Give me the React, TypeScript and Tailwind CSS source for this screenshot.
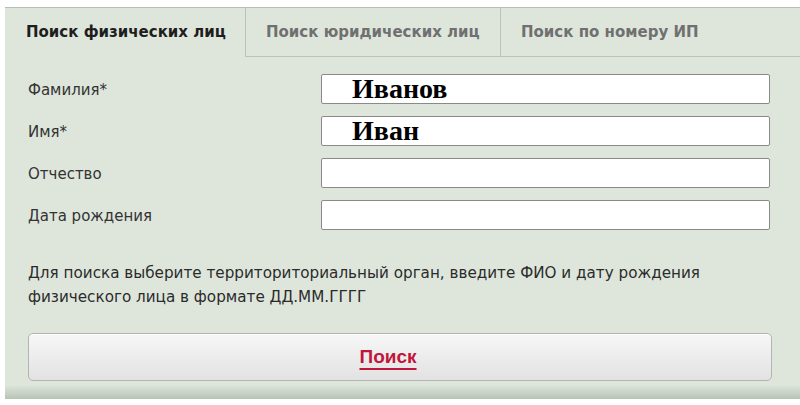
export default function App() {
  const fields = [
    { label: "Фамилия*", value: "Иванов" },
    { label: "Имя*", value: "Иван" },
    { label: "Отчество", value: "" },
    { label: "Дата рождения", value: "" },
  ];

  return (
    <div className="w-[800px] h-[405px] bg-white pt-[7px] pl-[5px] overflow-hidden font-['DejaVu_Sans',Verdana,sans-serif]">
      <div className="h-[392px] flex flex-col bg-[#dee6dc] border-t border-[#b6c0b4]">
        {/* Tabs */}
        <div className="flex h-[49px] shrink-0 text-[15px] font-bold">
          <div className="w-[240px] flex items-center pl-[21px] text-[#1e1e1e]">
            Поиск физических лиц
          </div>
          <div className="w-[255px] flex items-center pl-[20px] text-[#707070] border-l border-b border-[#b9c3b7]">
            Поиск юридических лиц
          </div>
          <div className="flex-1 flex items-center pl-[20px] text-[#707070] border-l border-b border-[#b9c3b7]">
            Поиск по номеру ИП
          </div>
        </div>

        {/* Form */}
        <div className="flex flex-col gap-[12px] pt-[17px] pl-[23px] pr-[30px]">
          {fields.map((f) => (
            <div key={f.label} className="flex items-center h-[30px]">
              <div className="w-[293px] pt-[2px] text-[15px] text-[#333]">{f.label}</div>
              <div className="flex-1 h-[30px] bg-white border border-[#8a8a8a] rounded-[2px] flex items-center pl-[30px] text-[28px] leading-none font-bold text-black font-['Liberation_Serif','Times_New_Roman',serif]">
                {f.value}
              </div>
            </div>
          ))}
        </div>

        <p className="mt-[31px] pl-[23px] pr-[10px] text-[15.2px] leading-[24px] text-[#2b2b2b]">
          Для поиска выберите территориториальный орган, введите ФИО и дату рождения
          <br />
          физического лица в формате ДД.ММ.ГГГГ
        </p>

        <div className="pl-[23px] pr-[28px] mt-[24px]">
          <button className="w-full h-[48px] rounded-[5px] border border-[#b2b6b0] bg-gradient-to-b from-[#f7f7f7] to-[#e2e2e2] shadow-[inset_0_1px_0_#ffffff] flex items-center justify-center pr-[24px]">
            <span className="text-[19px] font-bold text-[#c0163c] underline underline-offset-[5px] decoration-2 font-['Liberation_Sans',Arial,sans-serif]">
              Поиск
            </span>
          </button>
        </div>

        <div className="mt-auto h-[14px] bg-gradient-to-b from-[#dee6dc] to-[#b7c2b4]" />
      </div>
    </div>
  );
}
